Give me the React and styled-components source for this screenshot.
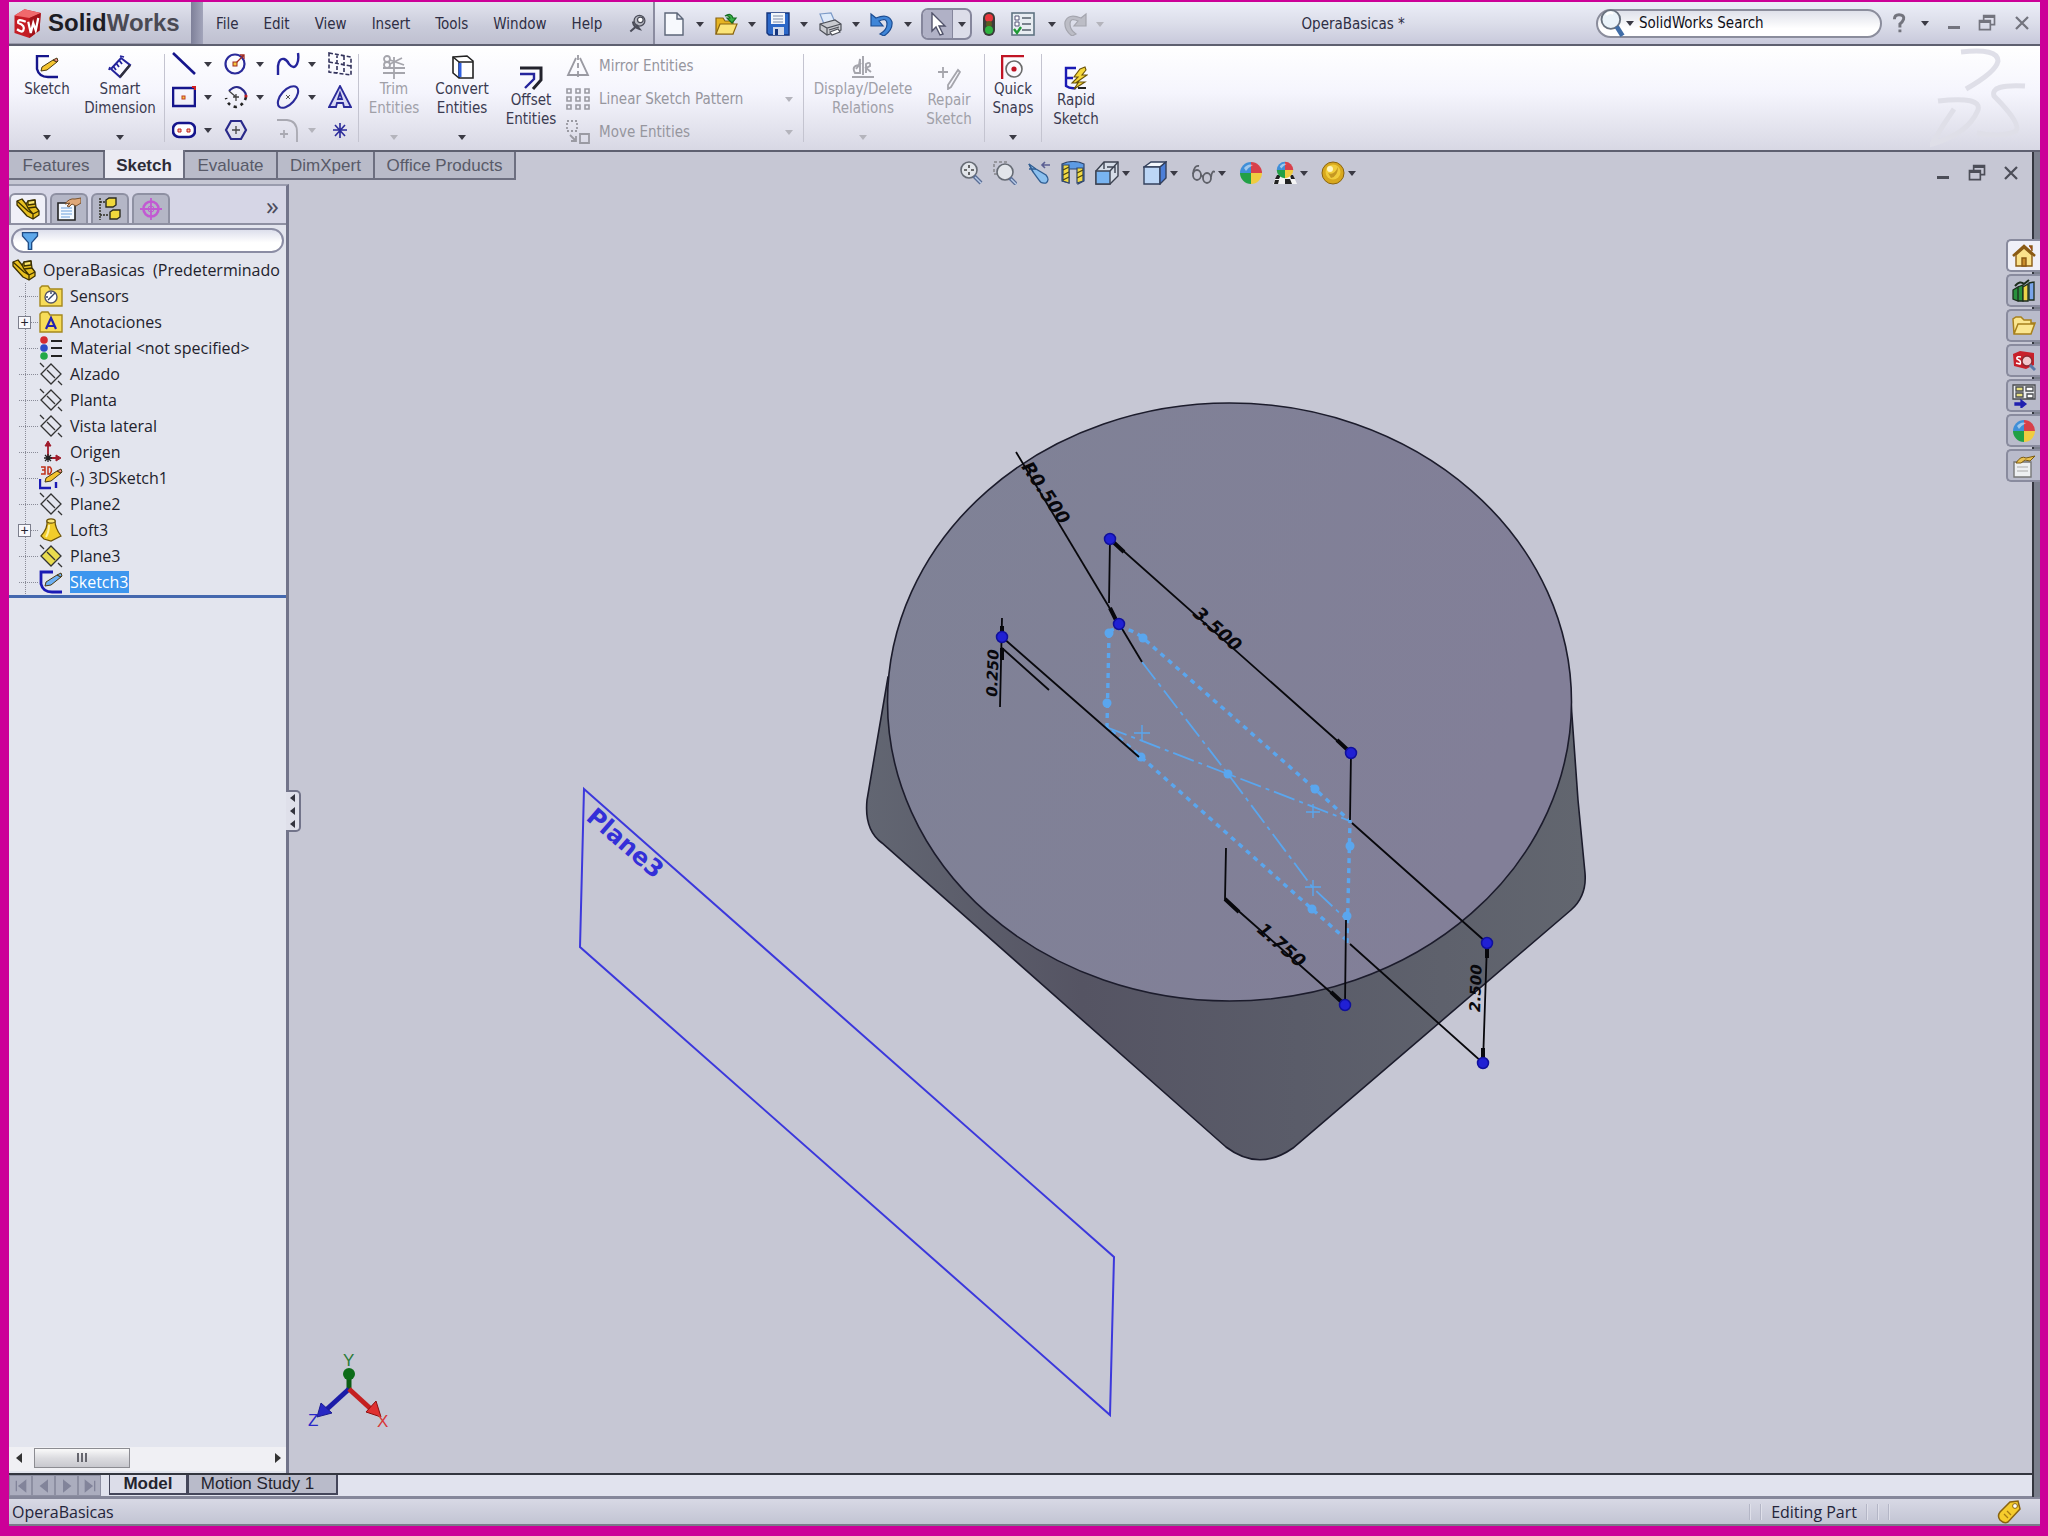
import React from 'react';
import styled, { createGlobalStyle } from 'styled-components';

const uiFont = "'DejaVu Sans Condensed', 'Noto Sans', sans-serif";
const treeFont = "'Open Sans', 'Noto Sans', sans-serif";
const tabFont = "'Liberation Sans', Arial, sans-serif";

const GlobalStyle = createGlobalStyle`
  * { box-sizing: border-box; }
  body { margin: 0; background: #cc0098; }
  button { border: 0; padding: 0; background: none; font: inherit; color: inherit; cursor: pointer; }
  ul { list-style: none; margin: 0; padding: 0; }
  svg { display: block; flex: none; }
`;

/* ---------- icons, all on a 24 x 24 grid ---------- */

const pencil = (fill = '#f4c430', tip = '#e88') => (
  <g strokeLinejoin="round">
    <path d="M7 12 L18 5 L22 7 L12 15 L6 16 Z" fill={fill} stroke="#4a3a10" strokeWidth="1" />
    <path d="M18 5 L22 3 L23 6 L22 7 Z" fill={tip} stroke="#4a3a10" strokeWidth="1" />
  </g>
);

const ball = (
  <g>
    <path d="M12 12 V1 A11 11 0 0 0 1 12 Z" fill="#3f8fd8" />
    <path d="M12 12 V1 A11 11 0 0 1 23 12 Z" fill="#d8404a" />
    <path d="M12 12 H1 A11 11 0 0 0 12 23 Z" fill="#22a046" />
    <path d="M12 12 H23 A11 11 0 0 1 12 23 Z" fill="#f0cc40" />
    <path d="M5 7 Q9 2 14 4 Q10 6 7 10 Z" fill="#fff" opacity=".5" />
  </g>
);

const partShape = (
  <g fill="#e8c020" stroke="#3c3000" strokeWidth="1.3" strokeLinejoin="round">
    <path d="M1 4 L6 2 L10 7 L12 4 L19 3 L20 10 L23 14 V18 L17 22 L11 19 L1 8 Z" />
    <path d="M10 7 L12 11 L20 10 M12 11 L17 17 L23 14 M17 17 V22 M1 4 L12 14 L17 17" fill="none" />
    <path d="M12 4 L19 3 L19 7 L12 8 Z" fill="#fbe56a" />
  </g>
);

const refPlane = fill => (
  <g fill={fill} stroke="#333" strokeWidth="1.3">
    <path d="M12 2 L22 12 L12 22 L2 12 Z" />
    <path d="M8 8 L16 16" />
    <path d="M1 1 L5 5 M19 19 L23 23" />
  </g>
);

const folder = (
  <path d="M1 4 L3 2 H9 L11 5 H23 V22 H1 Z" fill="#f7dc58" stroke="#a5881c" strokeWidth="1.4" />
);

const hand = <path d="M8 7 Q12 1 18 2 L24 1 V6 L19 9 L15 7 L12 10 L10 9 L13 6 Z" fill="#e0a878" stroke="#7a5430" strokeWidth="1" />;

const magnifier = (
  <g>
    <circle cx="10" cy="9" r="8" fill="#e2e5ea" stroke="#666b74" strokeWidth="1.6" />
    <path d="M15 15 L22 22" stroke="#5a6e96" strokeWidth="4" />
    <path d="M16 16 L22 22" stroke="#b8cbe8" strokeWidth="1.4" />
  </g>
);

const ICONS = {
  cube: (
    <g>
      <path d="M2 6 L10 1 L23 4 L22 18 L14 24 L2 20 Z" fill="#c41c24" />
      <path d="M2 6 L10 1 L23 4 L14 8 Z" fill="#f0696c" />
      <path d="M14 8 L23 4 L22 18 L14 24 Z" fill="#a3121a" />
      <path d="M11 11 Q4 8 5 12 Q11 14 9 18 Q8 20 4 17 M13 11 L15 20 L17 12 L19 18 L21 8" fill="none" stroke="#fff" strokeWidth="1.8" />
    </g>
  ),
  pin: (
    <g stroke="#4a4c58" strokeWidth="1.5">
      <circle cx="15" cy="8" r="6.5" fill="#b4b6c0" />
      <circle cx="16" cy="7" r="3.4" fill="#fff" />
      <path d="M7 9 Q8 16 15 18 L12 14 L4 21" fill="none" strokeWidth="2.4" />
    </g>
  ),
  doc: <path d="M3 1 H15 L21 7 V23 H3 Z M15 1 V7 H21" fill="#f7f9fd" stroke="#5c6678" strokeWidth="1.4" />,
  open: (
    <g strokeWidth="1.2">
      <path d="M2 6 H9 L11 9 H19 V22 H2 Z" fill="#e6b422" stroke="#8a6410" />
      <path d="M2 22 L6 12 H23 L19 22 Z" fill="#fbe478" stroke="#8a6410" />
      <path d="M11 4 Q17 0 19 6 H22 L18 11 L13 6 H16 Q15 3 11 4 Z" fill="#38b048" stroke="#156b22" />
    </g>
  ),
  save: (
    <g>
      <path d="M1 1 H23 V23 H3 L1 21 Z" fill="#2c68c8" stroke="#15357c" strokeWidth="1.4" />
      <path d="M5 1 H19 V12 H5 Z" fill="#f4f7fc" />
      <path d="M7 4 H17 M7 7 H17 M7 10 H17" stroke="#7b8aa8" />
      <path d="M7 15 H18 V23 H7 Z" fill="#cfd8ea" />
      <path d="M9 17 H12 V23 H9 Z" fill="#15357c" />
    </g>
  ),
  print: (
    <g stroke="#4d5058" strokeWidth="1.2">
      <path d="M2 2 L13 1 L17 10 L6 12 Z" fill="#dfeafa" stroke="#7b9ac8" />
      <path d="M2 12 L17 8 L23 12 V18 L9 23 L2 18 Z" fill="#c9cbd0" />
      <path d="M2 12 L9 16 L23 12 M9 16 V23 M11 18 L21 15" fill="none" />
      <path d="M12 20 L20 17 L22 20 L14 23 Z" fill="#fff" />
    </g>
  ),
  undo: <path d="M1 2 V14 H13 L9 9 Q17 5 17 12 Q17 18 10 22 L14 24 Q23 18 22 10 Q19 1 6 6 Z" fill="#3f86d8" stroke="#1b4c92" strokeWidth="1.2" />,
  redo: <path d="M23 2 V14 H11 L15 9 Q7 5 7 12 Q7 18 13 22 L9 24 Q1 18 2 10 Q5 1 18 6 Z" fill="#bcbdc6" stroke="#a4a5ae" strokeWidth="1.2" />,
  cursor: <path d="M6 1 V19 L10 15 L14 23 L17 22 L13 14 H19 Z" fill="#fff" stroke="#50526a" strokeWidth="1.4" />,
  light: (
    <g>
      <rect x="6" y="0" width="12" height="24" rx="6" fill="#3a3c3a" />
      <circle cx="12" cy="6" r="4" fill="#e8363c" />
      <circle cx="12" cy="12" r="3" fill="#5b5b20" />
      <circle cx="12" cy="18" r="4" fill="#2fb340" />
    </g>
  ),
  options: (
    <g>
      <rect x="1" y="1" width="22" height="22" fill="#e8edf2" stroke="#5f7382" strokeWidth="1.6" />
      <path d="M4 4 H8 V8 H4 Z M4 10 H8 V14 H4 Z" fill="#fff" stroke="#557" />
      <path d="M11 6 H20 M11 12 H20 M11 18 H20" stroke="#55606c" strokeWidth="1.4" />
      <path d="M3 17 L6 21 L10 15" fill="none" stroke="#1f9a34" strokeWidth="2.4" />
    </g>
  ),
  sketch: (
    <g>
      <path d="M14 1 H2 V14 Q4 22 13 22 H23" fill="none" stroke="#15158c" strokeWidth="2.4" />
      {pencil()}
    </g>
  ),
  sketchBlue: (
    <g>
      <path d="M14 2 H2 V14 Q4 22 13 22 H23" fill="none" stroke="#1a1ab4" strokeWidth="2.8" />
      {pencil('#6cb0f4', '#6cb0f4')}
    </g>
  ),
  dimension: (
    <g fill="none" stroke="#24249c" strokeWidth="2">
      <path d="M3 14 L13 3 L22 10 L12 22 Z" fill="#fafaff" />
      <path d="M12 22 L22 10" stroke="#30303c" strokeWidth="2.6" />
      <path d="M11 5 L14 9 M8 8 L11 12 M5 11 L8 15 M16 2 L12 1 M2 12 L1 15" strokeWidth="1.8" />
    </g>
  ),
  line: <path d="M1 1 L23 22" stroke="#15158c" strokeWidth="2.6" />,
  circle: (
    <g fill="none">
      <circle cx="11" cy="12" r="9.5" stroke="#2a2a9a" strokeWidth="2.2" />
      <path d="M11 12 L20 3 M16 3 H20 V7" stroke="#a02a20" strokeWidth="1.3" />
      <rect x="9" y="10" width="4" height="4" fill="#f4c840" stroke="#a02a20" />
    </g>
  ),
  spline: <path d="M2 23 V14 Q3 6 8 7 Q11 8 13 12 Q18 18 21 12 Q23 8 22 1" fill="none" stroke="#24249c" strokeWidth="2.4" />,
  planeDash: <path d="M1 1 L23 5 V23 L1 20 Z M9 2 V21 M16 4 V22 M1 10 L23 14" fill="none" stroke="#33335c" strokeWidth="1.6" strokeDasharray="4 2" />,
  rect: (
    <g fill="none">
      <path d="M1 3 H23 V21 H1 Z" stroke="#15158c" strokeWidth="2.6" />
      <rect x="10" y="11" width="3" height="3" fill="#f4c840" stroke="#c03a20" />
      <path d="M20 2 H23 V5" stroke="#d02020" strokeWidth="2" />
    </g>
  ),
  arc: (
    <g fill="none">
      <path d="M5 6 Q13 -2 20 6 Q22 8 22 11" stroke="#2a2a8a" strokeWidth="2.2" />
      <path d="M22 12 Q20 20 12 22 Q4 21 2 13" stroke="#222" strokeWidth="2.6" strokeDasharray="3 4" />
      <path d="M5 6 L12 12 M12 9 V16 M9 12 H15" stroke="#444" strokeWidth="1.3" />
      <circle cx="22" cy="11" r="1.6" fill="#c02020" />
    </g>
  ),
  ellipse: (
    <g fill="none">
      <ellipse cx="12" cy="12" rx="13" ry="7" transform="rotate(-48 12 12)" stroke="#2a2a9a" strokeWidth="2.1" />
      <path d="M10 10 L14 14 M14 10 L10 14" stroke="#555" />
    </g>
  ),
  text: (
    <path d="M12 1 L23 22 H16 L15 18 H9 L8 22 H1 Z M12 8 L10 14 H14 Z" fill="#d9d9f4" stroke="#2a2a9a" strokeWidth="1.8" />
  ),
  slot: (
    <g>
      <rect x="1" y="5" width="22" height="14" rx="6" fill="#fff" stroke="#15158c" strokeWidth="2.6" />
      <path d="M6 11 H9 V14 H6 Z M15 11 H18 V14 H15 Z" fill="#f4c0a0" stroke="#c02020" />
    </g>
  ),
  polygon: (
    <g fill="none">
      <path d="M7 3 H17 L22 12 L17 21 H7 L2 12 Z" stroke="#2a2a8a" strokeWidth="2.2" />
      <path d="M12 8 V16 M8 12 H16" stroke="#444" strokeWidth="1.3" />
    </g>
  ),
  fillet: <path d="M1 2 H11 Q21 3 21 14 V24 M8 12 V20 M4 16 H12" fill="none" stroke="#a9a9b2" strokeWidth="1.8" />,
  point: <path d="M12 5 V20 M5 12 H19 M7 7 L17 18 M17 7 L7 18" stroke="#2a2a9a" strokeWidth="1.6" />,
  trim: (
    <g fill="none" stroke="#a5a5ac" strokeWidth="1.8">
      <path d="M1 13 H23 M1 18 H23 M12 2 V24" />
      <circle cx="5" cy="4" r="3" /><circle cx="5" cy="10" r="3" />
      <path d="M8 5 L22 10 M8 9 L20 3" />
    </g>
  ),
  convert: (
    <g fill="#fff" stroke="#222" strokeWidth="1.6">
      <path d="M3 2 L17 1 L23 6 V23 H9 L3 18 Z" />
      <path d="M9 7 H23 M9 7 V23 M3 2 L9 7" />
      <path d="M10 8 V22" stroke="#3060e0" strokeWidth="3" />
    </g>
  ),
  offset: (
    <g fill="none">
      <path d="M1 2 H22 V14 L14 23" stroke="#22222c" strokeWidth="3" />
      <path d="M1 8 H15 V13 L6 22" stroke="#24249c" strokeWidth="2.4" />
    </g>
  ),
  mirror: <path d="M10 4 L2 21 H10 M14 4 L22 21 H14 M12 1 V6 M12 9 V14 M12 17 V23 M4 21 H20" fill="none" stroke="#9a9aa2" strokeWidth="1.8" />,
  pattern: (
    <g fill="none" stroke="#9a9aa2" strokeWidth="1.6">
      {[2, 10, 18].map(y => <path key={y} d={`M1 ${y} h4 v4 h-4 Z M10 ${y} h4 v4 h-4 Z M19 ${y} h4 v4 h-4 Z`} />)}
    </g>
  ),
  move: (
    <g fill="none" stroke="#9a9aa2" strokeWidth="1.8">
      <path d="M1 1 H11 V11 H1 Z" strokeDasharray="2 2" />
      <path d="M14 14 H23 V23 H14 Z M4 15 L10 21 M10 16 V21 H5" />
    </g>
  ),
  relations: <path d="M1 22 H23 M12 1 V20 M4 18 Q0 11 8 10 L9 4 V18 Z M15 18 V9 Q20 6 19 11 L15 13 L20 17 M5 14 L10 8" fill="none" stroke="#a5a5ac" strokeWidth="1.9" />,
  repair: <path d="M6 1 V12 M1 6 H11 M21 4 L23 6 L14 21 L11 23 L11 19 Z" fill="none" stroke="#a5a5ac" strokeWidth="1.8" />,
  snaps: (
    <g fill="none">
      <path d="M1 24 V1 H23" stroke="#c01424" strokeWidth="2.6" />
      <circle cx="13" cy="14" r="8" stroke="#6a6a6a" strokeWidth="1.6" />
      <circle cx="13" cy="14" r="2.6" fill="#c01424" />
    </g>
  ),
  rapid: (
    <g>
      <path d="M12 2 H2 V20 Q6 23 12 22 M2 12 H9" fill="none" stroke="#1a1ab4" strokeWidth="2.4" />
      <path d="M16 3 L21 1 L22 4 L18 9 H23 L13 16 H21 L10 23 L14 17 H8 L14 11 H10 Z" fill="#f6d83a" stroke="#6b5208" strokeWidth="1.1" />
      <path d="M14 22 H22" stroke="#222" strokeWidth="2" />
    </g>
  ),
  zoomFit: <g>{magnifier}<path d="M10 4 V7 M10 11 V14 M5 9 H8 M12 9 H15" stroke="#444" strokeWidth="1.6" /></g>,
  zoomArea: <g><path d="M1 1 H14 V13 H1 Z" fill="none" stroke="#666" strokeDasharray="3 2" /><g transform="translate(2 2)">{magnifier}</g></g>,
  prevView: (
    <g>
      <path d="M2 3 L9 8 L19 14 Q23 19 19 22 Q14 23 12 19 L6 11 Z" fill="#8cc0ee" stroke="#315e92" strokeWidth="1.3" />
      <path d="M2 3 L6 11 M9 8 L2 8" stroke="#315e92" strokeWidth="1.4" />
      <path d="M23 4 H15 M18 1 L15 4 L18 7" fill="none" stroke="#5b5f92" strokeWidth="1.6" />
    </g>
  ),
  section: (
    <g stroke="#30466c" strokeWidth="1.2">
      <path d="M1 3 Q12 -2 23 3 V20 L17 23 V8 H8 V22 L1 20 Z" fill="#5d9be4" />
      <path d="M2 4 H8 V22 L2 20 Z M16 7 H22 V20 L16 22 Z" fill="#f2da42" />
      <path d="M2 9 L8 6 M2 14 L8 11 M2 19 L8 16 M16 12 L22 9 M16 17 L22 14" stroke="#4a4410" />
    </g>
  ),
  orient: (
    <g stroke="#3c4250" strokeWidth="1.4">
      <path d="M1 10 L9 1 H23 V15 L15 23 H1 Z" fill="#d6dde8" />
      <path d="M1 10 H15 V23 H1 Z" fill="#79b4f0" />
      <path d="M15 10 L23 1 M9 1 V8 M12 6 H20 V12" fill="none" />
    </g>
  ),
  display: (
    <g stroke="#33405c" strokeWidth="1.4">
      <path d="M1 6 L8 1 H23 L17 6 Z" fill="#f3f7fc" />
      <path d="M1 6 H17 V23 H1 Z" fill="#bcd6f6" />
      <path d="M17 6 L23 1 V17 L17 23 Z" fill="#4c7fd8" />
    </g>
  ),
  glasses: (
    <g fill="none" stroke="#5e6068" strokeWidth="1.8">
      <ellipse cx="6" cy="14" rx="4" ry="5" /><ellipse cx="16" cy="17" rx="4" ry="5" />
      <path d="M10 14 L12 16 M2 13 Q3 4 8 5 M20 16 Q21 9 24 11" />
    </g>
  ),
  ball,
  scene: (
    <g>
      <path d="M4 14 H20 L24 23 H0 Z" fill="#f4f4f4" />
      <path d="M4 14 H8 L6 18 H2 Z M12 18 H17 L19 23 H12 Z M17 14 H20 L22 18 H18 Z M2 19 H6 L5 23 H1 Z" fill="#222" />
      <g transform="translate(3 0) scale(.75)">{ball}</g>
    </g>
  ),
  gold: (
    <g>
      <circle cx="12" cy="12" r="11" fill="#d8a81e" stroke="#8a6410" />
      <circle cx="12" cy="11" r="7.5" fill="#f0cc3c" />
      <path d="M7 12 Q13 15 17 6 Q17 15 10 17 Z" fill="#a87410" opacity=".6" />
      <circle cx="9" cy="8" r="3" fill="#fff6c0" />
    </g>
  ),
  part: partShape,
  props: (
    <g>
      <path d="M1 6 H18 V23 H1 Z" fill="#f4f9ff" stroke="#222" strokeWidth="1.6" />
      <path d="M4 11 H15 M4 14 H15 M4 17 H15 M4 20 H13" stroke="#6aa0dc" strokeWidth="1.2" />
      {hand}
    </g>
  ),
  config: (
    <g stroke="#2c2c20" strokeWidth="1.4">
      <path d="M2 1 V23 M2 5 H8 M2 18 H10" strokeDasharray="2 1" />
      <path d="M8 3 L11 1 H18 V8 L15 10 H8 Z M12 15 L15 13 H22 V20 L19 22 H12 Z" fill="#f0d83c" />
    </g>
  ),
  target: (
    <g fill="none" stroke="#c25ad2">
      <circle cx="12" cy="12" r="7.5" strokeWidth="2.6" />
      <path d="M12 1 V23 M1 12 H23" strokeWidth="1.8" />
      <circle cx="12" cy="12" r="3" />
    </g>
  ),
  funnel: <path d="M3 2 H21 V6 L14 14 V22 H10 V14 L3 6 Z" fill="#5ea8ea" stroke="#1f4c86" strokeWidth="1.6" />,
  sensors: (
    <g>{folder}<circle cx="12" cy="13" r="6" fill="#fff" stroke="#556" strokeWidth="1.4" /><path d="M9 16 L16 9 M12 8 V10 M7 13 H9" stroke="#346" strokeWidth="1.4" /></g>
  ),
  notes: <g>{folder}<path d="M7 19 L12 8 L17 19 M9 16 H15" fill="none" stroke="#2424b0" strokeWidth="2.2" /></g>,
  material: (
    <g>
      <circle cx="5" cy="4" r="3.8" fill="#d42a30" /><circle cx="5" cy="12" r="3.8" fill="#2c4cc8" /><circle cx="5" cy="20" r="3.8" fill="#22a848" />
      <path d="M12 5 H23 M12 12 H23 M12 20 H23" stroke="#222" strokeWidth="2.2" />
    </g>
  ),
  plane: refPlane('none'),
  planeGold: refPlane('#e9dc4e'),
  origin: (
    <g stroke="#a01c2c" fill="#a01c2c" strokeWidth="1.8">
      <path d="M9 18 V5 M10 18 H18" />
      <path d="M6 6 L9 1 L12 6 Z M17 15 L22 18 L17 21 Z" strokeWidth="1" />
      <path d="M9 14 V22 M5 18 H13 M6 15 L12 21 M12 15 L6 21" stroke="#222" strokeWidth="1.3" />
    </g>
  ),
  sketch3d: (
    <g>
      <path d="M2 1 H6 V8 H2 M3 4 H6 M9 1 H11 Q14 4 11 8 H9 Z" fill="none" stroke="#c03018" strokeWidth="1.5" />
      <path d="M1 13 V22 H12 M17 22 V16" fill="none" stroke="#1a1ab4" strokeWidth="2.4" />
      {pencil()}
    </g>
  ),
  loft: (
    <g stroke="#6b5208" strokeWidth="1.2">
      <path d="M8 3 Q9 10 2 18 L5 21 L12 23 L22 18 Q16 10 16 3 Z" fill="#f2cc2a" />
      <ellipse cx="12" cy="3" rx="4.2" ry="2.2" fill="#fbe678" />
      <path d="M10 7 Q10 14 7 19" fill="none" stroke="#fdf0a0" strokeWidth="2" />
    </g>
  ),
  home: (
    <g stroke="#8a5a14" strokeWidth="1.4">
      <path d="M4 11 L12 4 L20 11 V22 H4 Z" fill="#fbe28c" />
      <path d="M1 12 L12 2 L23 12" fill="none" strokeWidth="2.6" />
      <path d="M17 2 H20 V7" fill="#b04020" /><path d="M10 14 H14 V22 H10 Z" fill="#c88c2c" />
    </g>
  ),
  library: (
    <g stroke="#1c2c1c" strokeWidth="1.3">
      <path d="M1 11 L6 8 V22 L1 20 Z M6 8 L11 6 V22 H6 Z" fill="#28903c" />
      <path d="M11 8 L16 5 V22 H11 Z" fill="#ecd24a" /><path d="M17 4 L22 3 V21 H17 Z" fill="#7aa4ea" />
      <path d="M3 7 Q8 1 12 5 L17 1" fill="none" strokeWidth="2" />
    </g>
  ),
  openFolder: <path d="M2 20 L1 5 L4 3 H9 L12 6 H19 V9 H23 L19 20 Z M2 20 L6 10 H23" fill="#fbe690" stroke="#a8801c" strokeWidth="1.5" />,
  swSearch: (
    <g>
      <path d="M1 5 L8 2 L22 4 V16 L14 20 L2 17 Z" fill="#c8202a" />
      <path d="M9 8 Q4 7 5 10 Q10 12 8 15 L4 14" fill="none" stroke="#fff" strokeWidth="1.6" />
      <circle cx="15" cy="12" r="5" fill="#f0c8cc" stroke="#8a2a30" strokeWidth="1.4" /><path d="M18 16 L23 21" stroke="#5a78a8" strokeWidth="3" />
    </g>
  ),
  palette: (
    <g stroke="#4a4c50" strokeWidth="1.3">
      <path d="M1 1 H23 V15 H1 Z" fill="#eceef0" /><path d="M4 3 H11 V7 H4 Z M4 9 H11 V13 H4 Z" fill="#e8e080" /><path d="M14 3 H21 V7 H14 Z M15 10 H21 V14 H15 Z" fill="#fff" />
      <path d="M3 19 H9 V16 L14 20 L9 24 V21 H3 Z" fill="#2020b0" stroke="#2020b0" />
    </g>
  ),
  custom: <g><path d="M2 8 H19 V23 H2 Z" fill="#eef0f2" stroke="#777" strokeWidth="1.4" /><path d="M5 13 H16 M5 17 H16" stroke="#aaa" /><path d="M4 9 Q9 1 14 4 L23 2 L18 7 L13 6 L9 9 Z" fill="#e8c050" stroke="#7a5a14" /></g>,
  tag: (
    <g>
      <path d="M13 2 L21 1 L23 9 L11 22 Q7 24 3 20 Q0 16 3 12 Z" fill="#f6cc2c" stroke="#8a6410" strokeWidth="1.5" />
      <circle cx="18" cy="6" r="2.4" fill="#fff" stroke="#8a6410" /><path d="M7 14 L11 18 M10 11 L14 15" stroke="#a87c14" strokeWidth="1.3" />
    </g>
  ),
  help: <path d="M7 8 Q7 3 12 3 Q18 3 17 8 Q16 11 13 13 V17 M13 19 V22" fill="none" stroke="#73747e" strokeWidth="3.2" />,
  minimize: <path d="M6 15 H18 V18 H6 Z" fill="currentColor" />,
  restore: <path d="M8 9 V3 H21 V14 H16 M8 5 H21 M3 9 H16 V20 H3 Z M3 11 H16" fill="none" stroke="currentColor" strokeWidth="2" />,
  close: <path d="M4 4 L20 20 M20 4 L4 20" stroke="currentColor" strokeWidth="3" />,
  look: (
    <g>
      <circle cx="11" cy="9" r="8" fill="#eaf3fa" stroke="#68717e" strokeWidth="1.6" />
      <path d="M7 5 Q10 2 13 4" fill="none" stroke="#fff" strokeWidth="2" />
      <path d="M16 15 L21 23" stroke="#3f6da8" strokeWidth="4" />
    </g>
  ),
};

const Icon = ({ name, size = 24 }) => (
  <svg width={size} height={size} viewBox="0 0 24 24" aria-hidden="true">{ICONS[name]}</svg>
);

const Arrow = styled.span`
  width: 0;
  height: 0;
  border: 4px solid transparent;
  border-top: 5px solid ${p => (p.$off ? '#b4b4bc' : '#3a3a44')};
  border-bottom: 0;
`;

/* ---------- frame ---------- */

const Frame = styled.div`
  display: flex;
  flex-direction: column;
  min-height: 100vh;
  border: solid #cc0098;
  border-width: 2px 8px 10px 9px;
  background: #c6c7d4;
  font-family: ${uiFont};
  font-size: 15px;
  color: #2e2e44;
`;

const TitleBar = styled.header`
  display: flex;
  align-items: center;
  height: 44px;
  border-bottom: 2px solid #5e6070;
  background: linear-gradient(#eceef8, #dcdeea 50%, #c8c9db);
`;

const MenuSide = styled.div`
  display: flex;
  align-self: stretch;
  border-right: 2px solid #8b8ca0;
  background: linear-gradient(#e2e3ee, #c9cbda 60%, #bfc0d0);
`;

const Brand = styled.div`
  display: flex;
  align-items: center;
  gap: 6px;
  width: 182px;
  padding-left: 3px;
  border-bottom: 1px solid #9a9bac;
  font: bold 24px ${tabFont};
  color: #1c1c24;

  span { color: #4a4a54; }
`;

const Grip = styled.div`
  width: 12px;
  background: linear-gradient(90deg, #7e8099, #a2a4ba);
`;

const Menu = styled.nav`
  display: flex;
  align-items: center;
  gap: 25px;
  padding: 2px 6px 0 13px;
`;

const QuickBar = styled.div`
  display: flex;
  align-items: center;
  padding: 2px 0 0 6px;
`;

const IconButton = styled.button`
  display: flex;
  align-items: center;
  justify-content: center;
  width: ${p => p.$w || 26}px;
  height: 26px;
  color: ${p => p.$tone || '#73747e'};
`;

const SelectTool = styled.div`
  display: flex;
  align-items: center;
  height: 32px;
  margin-right: 4px;
  border: 2px solid #85869c;
  border-radius: 7px;
  background: #dcdde9;

  button:first-child {
    height: 28px;
    border-right: 1px solid #85869c;
    border-radius: 5px 0 0 5px;
    background: #b0b1c6;
  }
`;

const DocTitle = styled.div`
  flex: 1;
  padding-top: 2px;
  text-align: center;
`;

const Search = styled.label`
  display: flex;
  align-items: center;
  width: 286px;
  height: 29px;
  margin-right: 4px;
  border: 2px solid #8b8d9c;
  border-radius: 15px;
  background: linear-gradient(#dfe1ea, #fff 70%);

  input {
    flex: 1;
    min-width: 0;
    padding: 0 0 0 5px;
    border: 0;
    outline: 0;
    background: none;
    font: 15px ${uiFont};
    color: #101018;
  }
  input::placeholder { color: #101018; opacity: 1; }
`;

const Ribbon = styled.section`
  display: flex;
  height: 106px;
  padding-left: 5px;
  border-bottom: 2px solid #5e6070;
  background: linear-gradient(#fff, #f5f5fd 45%, #d8d8e4);
`;

const BigButton = styled.button`
  display: flex;
  flex-direction: column;
  align-items: center;
  justify-content: ${p => (p.$arrow ? 'flex-start' : 'center')};
  width: ${p => p.$w}px;
  padding: 9px 0 10px;
  line-height: 19px;
  color: ${p => (p.$off ? '#a0a0a8' : '#3a3a50')};

  svg { margin-bottom: 1px; }
  ${Arrow} { margin-top: auto; }
`;

const Rule = styled.div`
  width: 1px;
  margin: 8px 4px;
  background: #c4c4d0;
`;

const ToolGrid = styled.div`
  display: grid;
  grid-template-columns: repeat(3, 52px) 24px;
  align-content: space-between;
  padding: 5px 2px 7px 3px;
`;

const ToolCell = styled.div`
  display: flex;
  align-items: center;
`;

const EntityList = styled.div`
  display: flex;
  flex-direction: column;
  justify-content: space-between;
  width: 236px;
  padding: 8px 6px 6px 3px;
`;

const EntityButton = styled.button`
  display: flex;
  align-items: center;
  gap: 9px;
  height: 24px;
  color: #96969e;

  ${Arrow} { margin-left: auto; }
`;

const Watermark = styled.svg`
  margin-left: auto;
  margin-right: 14px;
`;

/* ---------- workspace ---------- */

const Workspace = styled.main`
  flex: 1;
  display: flex;
  flex-direction: column;
  border-right: 6px solid #7a7f8c;
  box-shadow: inset -2px 0 0 #33363f;
`;

const TabRow = styled.div`
  display: flex;
  align-items: flex-start;
  height: 32px;
`;

const CommandTab = styled.button`
  height: ${p => (p.$on ? 30 : 28)}px;
  width: ${p => p.$w}px;
  margin-top: ${p => (p.$on ? -2 : 0)}px;
  padding-top: ${p => (p.$on ? 3 : 1)}px;
  border: solid #6d6f80;
  border-width: 0 2px 2px 0;
  background: ${p => (p.$on ? '#ebebf3' : '#b9bbc9')};
  font: ${p => (p.$on ? 'bold ' : '')}17px ${tabFont};
  color: ${p => (p.$on ? '#2c2c38' : '#585a68')};
`;

const ViewTools = styled.div`
  flex: 1;
  display: flex;
  justify-content: center;
  gap: 10px;
  padding: 8px 124px 0 0;
`;

const ViewTool = styled.div`
  display: flex;
  align-items: center;

  button + button { width: 14px; }
`;

const WindowButtons = styled.div`
  display: flex;
  padding: 8px 6px 0 0;
`;

const Body = styled.div`
  flex: 1;
  display: flex;
`;

const Side = styled.aside`
  position: relative;
  display: flex;
  flex-direction: column;
  width: 280px;
  border-top: 2px solid #9a9cae;
  border-right: 3px solid #72748a;
  background: #e3e5ee;
`;

const PanelTabs = styled.div`
  display: flex;
  align-items: flex-end;
  gap: 3px;
  height: 39px;
  border-bottom: 2px solid #8e90a2;
  background: #d6d6e6;

  > span { margin: 0 7px 5px auto; font: 26px/26px ${treeFont}; color: #4c4c5c; }
`;

const PanelTab = styled.button`
  display: flex;
  align-items: center;
  justify-content: center;
  width: 38px;
  height: 30px;
  border: 2px solid #8e90a2;
  border-bottom: 0;
  border-radius: 6px 6px 0 0;
  background: ${p => (p.$on ? '#f0f0f8' : '#b4b6c6')};
`;

const Filter = styled.label`
  display: flex;
  align-items: center;
  height: 25px;
  margin: 3px 2px 4px;
  padding-left: 7px;
  border: 2px solid #8b8da4;
  border-radius: 13px;
  background: linear-gradient(#dddfec, #fff 60%);

  input { flex: 1; min-width: 0; border: 0; outline: 0; background: none; font: 15px ${treeFont}; }
`;

const Tree = styled.ul`
  border-bottom: 3px solid #4468ae;
  font: 16px/26px ${treeFont};
  color: #22222c;
`;

const TreeRow = styled.li`
  display: flex;
  align-items: center;
  height: 26px;
  padding-left: ${p => (p.$root ? 3 : 9)}px;
  white-space: nowrap;

  button { margin-left: 7px; line-height: 22px; white-space: pre; }
  button[aria-selected='true'] { background: #3d96ee; color: #fff; }
`;

const Branch = styled.span`
  display: flex;
  align-items: center;
  align-self: stretch;
  width: 21px;
  background:
    linear-gradient(90deg, #8a8c98 50%, transparent 0) 7px 13px / 2px 1px repeat-x,
    linear-gradient(#8a8c98 50%, transparent 0) 7px 0 / 1px 2px repeat-y;

  i {
    width: 13px;
    height: 13px;
    border: 1px solid #7c7e8c;
    background: #f8f8fc;
    font: normal 14px/10px ${tabFont};
    text-align: center;
  }
`;

const ScrollBar = styled.div`
  display: flex;
  align-items: center;
  gap: 12px;
  height: 24px;
  margin: auto 0 2px;
  padding: 0 5px 3px 7px;
  background: #f0f0f4;

  i { border: 5px solid transparent; }
  i:first-child { border-right: 6px solid #333; border-left: 0; }
  i:last-child { margin-left: auto; border-left: 6px solid #333; border-right: 0; }
`;

const Thumb = styled.div`
  display: flex;
  align-items: center;
  justify-content: center;
  gap: 2px;
  width: 96px;
  height: 20px;
  border: 1px solid #8c8c92;
  background: linear-gradient(#fafafa, #dcdce0 50%, #c8c8ce);

  b { width: 2px; height: 9px; background: #66666e; }
`;

const Handle = styled.div`
  position: absolute;
  top: 604px;
  right: -15px;
  display: flex;
  flex-direction: column;
  align-items: center;
  justify-content: space-around;
  width: 15px;
  height: 42px;
  border: 2px solid #72748a;
  border-left: 0;
  border-radius: 0 5px 5px 0;
  background: #dfe0ea;

  i { border: 4px solid transparent; border-right: 5px solid #33343e; border-left: 0; }
`;

const Canvas = styled.div`
  position: relative;
  flex: 1;
  display: flex;

  > svg { width: 100%; height: 100%; }
`;

const TaskPane = styled.div`
  position: absolute;
  top: 55px;
  right: -6px;
  display: flex;
  flex-direction: column;
  gap: 2px;
`;

const TaskTab = styled.button`
  display: flex;
  align-items: center;
  justify-content: center;
  width: 34px;
  height: 33px;
  border: 2px solid #898b9e;
  border-right: 0;
  border-radius: 5px 0 0 5px;
  background: ${p => (p.$on ? '#f0f0f8' : '#b9bbcb')};
`;

const SheetBar = styled.footer`
  display: flex;
  height: 24px;
  margin-right: 2px;
  border-top: 2px solid #33363f;
  border-bottom: 1px solid #85879a;
  background: #e1e3ee;
`;

const NavButton = styled.button`
  width: 23px;
  height: 21px;
  border: 1px solid #8d8fa2;
  background: #abadbe;
  color: #82849a;
  display: flex;
  align-items: center;
  justify-content: center;
`;

const SheetTab = styled.button`
  width: ${p => p.$w}px;
  height: 20px;
  margin-left: ${p => (p.$on ? 8 : 0)}px;
  padding-right: ${p => (p.$on ? 0 : 10)}px;
  border: solid #44465a;
  border-width: 0 2px 2px 1px;
  background: ${p => (p.$on ? '#dcdde9' : '#b9bbca')};
  font: ${p => (p.$on ? 'bold ' : '')}17px/18px ${tabFont};
  color: #24242e;
`;

const StatusBar = styled.footer`
  display: flex;
  align-items: center;
  gap: 9px;
  height: 29px;
  padding: 0 19px 0 3px;
  border-top: 2px solid #85879a;
  border-bottom: 2px solid #7a7c8a;
  background: linear-gradient(#d8d9e5, #c2c4d3);
  font: 16px ${treeFont};
  color: #24243a;

  > span:first-child { margin-right: auto; }
  > svg { margin-left: 98px; }
`;

const Notch = styled.i`
  width: 2px;
  height: 16px;
  border-left: 1px solid #b4b6c6;
  border-right: 1px solid #dfe0ea;
`;

/* ---------- data ---------- */

const quickTools = ['doc', 'open', 'save', 'print', 'undo'];

const sketchTools = [
  ['line', 1], ['circle', 1], ['spline', 1], ['planeDash'],
  ['rect', 1], ['arc', 1], ['ellipse', 1], ['text'],
  ['slot', 1], ['polygon'], ['fillet', 2], ['point'],
];

const viewTools = [
  ['zoomFit'], ['zoomArea'], ['prevView'], ['section'], ['orient', 1],
  ['display', 1], ['glasses', 1], ['ball'], ['scene', 1], ['gold', 1],
];

const treeItems = [
  { icon: 'sensors', label: 'Sensors' },
  { icon: 'notes', label: 'Anotaciones', plus: true },
  { icon: 'material', label: 'Material <not specified>' },
  { icon: 'plane', label: 'Alzado' },
  { icon: 'plane', label: 'Planta' },
  { icon: 'plane', label: 'Vista lateral' },
  { icon: 'origin', label: 'Origen' },
  { icon: 'sketch3d', label: '(-) 3DSketch1' },
  { icon: 'plane', label: 'Plane2' },
  { icon: 'loft', label: 'Loft3', plus: true },
  { icon: 'planeGold', label: 'Plane3' },
  { icon: 'sketchBlue', label: 'Sketch3', selected: true },
];

const taskTabs = ['home', 'library', 'openFolder', 'swSearch', 'palette', 'ball', 'custom'];

const handles = [[1110, 539], [1351, 753], [1119, 624], [1002, 637], [1487, 943], [1483, 1063], [1345, 1005]];

const slotPoints = [
  [1109, 633], [1107, 703], [1143, 638], [1141, 757], [1315, 789],
  [1350, 846], [1347, 916], [1312, 909], [1228, 774],
];

/* ---------- parts ---------- */

const Large = ({ icon, lines, w, arrow, off }) => (
  <BigButton $w={w} $arrow={arrow} $off={off} disabled={off}>
    <Icon name={icon} />
    {lines.map(l => <span key={l}>{l}</span>)}
    {arrow && <Arrow $off={off} />}
  </BigButton>
);

const Model = () => (
  <svg viewBox="289 184 1745 1289" role="img" aria-label="Part model">
    <defs>
      <linearGradient id="side" x1="0" x2="1">
        <stop offset="0" stopColor="#626672" />
        <stop offset=".3" stopColor="#555463" />
        <stop offset=".6" stopColor="#5a5c69" />
        <stop offset="1" stopColor="#62666f" />
      </linearGradient>
      <linearGradient id="top" x1="0" y1="0" x2="1" y2=".3">
        <stop offset="0" stopColor="#7f8296" />
        <stop offset="1" stopColor="#827f98" />
      </linearGradient>
    </defs>

    <g stroke="#1c1c2c" strokeWidth="1.6">
      <path d="M888 677 L867 800 Q864 830 882 843 L1226 1147 Q1259 1172 1293 1148 L1571 910 Q1587 896 1585 873 L1578 800 L1571 702 Z" fill="url(#side)" />
      <ellipse cx="1229.5" cy="702" rx="342" ry="299" fill="url(#top)" />
    </g>

    <g fill="none" stroke="#5aa6ee">
      <g strokeWidth="3.4" strokeDasharray="5 5">
        <path d="M1109 633 L1107 727 L1141 757 L1312 909 L1350 943" />
        <path d="M1109 631 Q1126 624 1143 638 L1315 789 L1350 821 L1347 943" />
      </g>
      <g strokeWidth="1.8" strokeDasharray="22 5 4 5">
        <path d="M1142 662 L1228 774 L1313 888 L1347 920" />
        <path d="M1106 727 L1228 774 L1350 821" />
      </g>
      <path d="M1142 725 V741 M1134 733 H1150 M1313 804 V818 M1306 812 H1320 M1313 880 V896 M1305 887 H1321" strokeWidth="1.4" />
    </g>
    {slotPoints.map(([x, y]) => <circle key={`${x}-${y}`} cx={x} cy={y} r="4.5" fill="#5aa6ee" />)}

    <g stroke="#08080c" strokeWidth="1.8" fill="none">
      <path d="M1016 452 L1109 607 L1142 662" />
      <path d="M1109 603 L1110 539 L1351 753 L1350 820" />
      <path d="M1002 618 L1000 707 M1002 637 L1139 757 M1002 648 L1049 690" />
      <path d="M1352 823 L1487 943 L1483 1063 L1350 944" />
      <path d="M1226 848 L1225 899 L1345 1005 L1346 920" />
      <path d="M1110 539 L1124 552 M1351 753 L1337 740 M1110 608 L1118 624 M1002 637 V626 M1002 648 V660 M1487 943 V958 M1483 1063 V1048 M1225 899 L1239 912 M1345 1005 L1331 992" strokeWidth="4" />
    </g>
    {handles.map(([x, y]) => <circle key={x} cx={x} cy={y} r="5.5" fill="#2020d4" stroke="#10109c" strokeWidth="1.5" />)}

    <g fill="#08080c" fontFamily="DejaVu Sans" fontStyle="italic" fontSize="18" fontWeight="bold">
      <text transform="translate(1021 467) rotate(56)">R0.500</text>
      <text transform="translate(1192 615) rotate(41)">3.500</text>
      <text transform="translate(1256 931) rotate(41)">1.750</text>
      <text transform="translate(997 697) rotate(-88)" fontSize="15">0.250</text>
      <text transform="translate(1480 1012) rotate(-88)" fontSize="15">2.500</text>
    </g>

    <path d="M584 789 L1114 1257 L1110 1415 L580 947 Z" fill="none" stroke="#3c38dc" strokeWidth="2" />
    <text transform="translate(585 819) rotate(41)" fill="#3430d8" fontFamily="DejaVu Sans" fontSize="24" fontWeight="bold">Plane3</text>

    <g strokeWidth="5">
      <path d="M349 1389 V1374" stroke="#0c5c14" />
      <circle cx="349" cy="1374" r="6" fill="#0c6c18" />
      <path d="M349 1389 L326 1410" stroke="#1c1ca8" />
      <path d="M317 1417 L321 1403 L332 1413 Z" fill="#2828c4" stroke="#1c1c90" strokeWidth="1" />
      <path d="M349 1389 L372 1410" stroke="#c42020" />
      <path d="M381 1417 L366 1412 L376 1401 Z" fill="#e03030" stroke="#8c1010" strokeWidth="1" />
    </g>
    <g fontFamily="Liberation Sans" fontSize="17">
      <text x="343" y="1366" fill="#2c7c38">Y</text>
      <text x="308" y="1426" fill="#2828c8">Z</text>
      <text x="377" y="1427" fill="#d83838">X</text>
    </g>
  </svg>
);

const App = () => {
  return (
    <>
      <GlobalStyle />
      <Frame>
        <TitleBar>
          <MenuSide>
            <Brand><Icon name="cube" size={30} /><div>Solid<span>Works</span></div></Brand>
            <Grip />
            <Menu>
              {['File', 'Edit', 'View', 'Insert', 'Tools', 'Window', 'Help'].map(m => <button key={m}>{m}</button>)}
              <button aria-label="Pin menu"><Icon name="pin" size={20} /></button>
            </Menu>
          </MenuSide>
          <QuickBar>
            {quickTools.map(t => (
              <React.Fragment key={t}>
                <IconButton aria-label={t}><Icon name={t} /></IconButton>
                <IconButton aria-label={`${t} options`}><Arrow /></IconButton>
              </React.Fragment>
            ))}
            <SelectTool>
              <IconButton $w={30} aria-label="Select"><Icon name="cursor" /></IconButton>
              <IconButton $w={17} aria-label="Select options"><Arrow /></IconButton>
            </SelectTool>
            <IconButton aria-label="Rebuild"><Icon name="light" /></IconButton>
            <IconButton $w={42} aria-label="Options"><Icon name="options" /></IconButton>
            <IconButton $w={16} aria-label="Options menu"><Arrow /></IconButton>
            <IconButton $w={30} aria-label="Redo"><Icon name="redo" /></IconButton>
            <IconButton $w={20} aria-label="Redo options"><Arrow $off /></IconButton>
          </QuickBar>
          <DocTitle>OperaBasicas *</DocTitle>
          <Search>
            <Icon name="look" size={28} />
            <Arrow />
            <input placeholder="SolidWorks Search" aria-label="SolidWorks Search" />
          </Search>
          <IconButton aria-label="Help"><Icon name="help" size={22} /></IconButton>
          <IconButton aria-label="Help options"><Arrow /></IconButton>
          <IconButton $w={32} aria-label="Minimize"><Icon name="minimize" /></IconButton>
          <IconButton $w={34} aria-label="Restore"><Icon name="restore" size={20} /></IconButton>
          <IconButton $w={36} aria-label="Close"><Icon name="close" size={18} /></IconButton>
        </TitleBar>

        <Ribbon>
          <Large icon="sketch" lines={['Sketch']} w={66} arrow />
          <Large icon="dimension" lines={['Smart', 'Dimension']} w={80} arrow />
          <Rule />
          <ToolGrid>
            {sketchTools.map(([t, drop]) => (
              <ToolCell key={t}>
                <IconButton $w={24} aria-label={t}><Icon name={t} /></IconButton>
                {drop && <IconButton $w={24} aria-label={`${t} options`}><Arrow $off={drop === 2} /></IconButton>}
              </ToolCell>
            ))}
          </ToolGrid>
          <Rule />
          <Large icon="trim" lines={['Trim', 'Entities']} w={62} arrow off />
          <Large icon="convert" lines={['Convert', 'Entities']} w={74} arrow />
          <Large icon="offset" lines={['Offset', 'Entities']} w={64} />
          <EntityList>
            <EntityButton><Icon name="mirror" />Mirror Entities</EntityButton>
            <EntityButton><Icon name="pattern" />Linear Sketch Pattern<Arrow $off /></EntityButton>
            <EntityButton><Icon name="move" />Move Entities<Arrow $off /></EntityButton>
          </EntityList>
          <Rule />
          <Large icon="relations" lines={['Display/Delete', 'Relations']} w={110} arrow off />
          <Large icon="repair" lines={['Repair', 'Sketch']} w={62} off />
          <Rule />
          <Large icon="snaps" lines={['Quick', 'Snaps']} w={48} arrow />
          <Rule />
          <Large icon="rapid" lines={['Rapid', 'Sketch']} w={60} />
          <Watermark width="96" height="104" viewBox="0 0 96 104" fill="none" stroke="#dfdfe8" strokeWidth="5">
            <path d="M31 6 Q68 2 68 15 Q66 26 36 43" />
            <path d="M8 55 Q52 50 48 64 Q38 88 2 98 Q12 80 24 63" />
            <path d="M95 40 Q60 38 64 50 Q92 78 86 85 Q72 92 47 87" />
          </Watermark>
        </Ribbon>

        <Workspace>
          <TabRow>
            <CommandTab $w={96}>Features</CommandTab>
            <CommandTab $w={80} $on>Sketch</CommandTab>
            <CommandTab $w={93}>Evaluate</CommandTab>
            <CommandTab $w={97}>DimXpert</CommandTab>
            <CommandTab $w={141}>Office Products</CommandTab>
            <ViewTools>
              {viewTools.map(([t, drop]) => (
                <ViewTool key={t}>
                  <IconButton $w={24} aria-label={t}><Icon name={t} /></IconButton>
                  {drop && <IconButton $w={14} aria-label={`${t} options`}><Arrow /></IconButton>}
                </ViewTool>
              ))}
            </ViewTools>
            <WindowButtons>
              <IconButton $w={34} $tone="#4c4e58" aria-label="Minimize document"><Icon name="minimize" /></IconButton>
              <IconButton $w={34} $tone="#4c4e58" aria-label="Restore document"><Icon name="restore" size={20} /></IconButton>
              <IconButton $w={34} $tone="#4c4e58" aria-label="Close document"><Icon name="close" size={18} /></IconButton>
            </WindowButtons>
          </TabRow>

          <Body>
            <Side>
              <PanelTabs>
                {['part', 'props', 'config', 'target'].map((t, i) => (
                  <PanelTab key={t} $on={i === 0} aria-label={t}><Icon name={t} /></PanelTab>
                ))}
                <span>»</span>
              </PanelTabs>
              <Filter>
                <Icon name="funnel" size={20} />
                <input aria-label="Filter tree" />
              </Filter>
              <Tree role="tree">
                <TreeRow $root><Icon name="part" /><button>OperaBasicas  (Predeterminado</button></TreeRow>
                {treeItems.map(t => (
                  <TreeRow key={t.label}>
                    <Branch>{t.plus && <i>+</i>}</Branch>
                    <Icon name={t.icon} />
                    <button role="treeitem" aria-selected={!!t.selected}>{t.label}</button>
                  </TreeRow>
                ))}
              </Tree>
              <ScrollBar>
                <i />
                <Thumb><b /><b /><b /></Thumb>
                <i />
              </ScrollBar>
              <Handle><i /><i /><i /></Handle>
            </Side>
            <Canvas>
              <Model />
              <TaskPane>
                {taskTabs.map((t, i) => <TaskTab key={t} $on={i === 0} aria-label={t}><Icon name={t} /></TaskTab>)}
              </TaskPane>
            </Canvas>
          </Body>

          <SheetBar>
            {['M5 4 V20 M19 4 L9 12 L19 20 Z', 'M17 4 L7 12 L17 20 Z', 'M7 4 L17 12 L7 20 Z', 'M19 4 V20 M5 4 L15 12 L5 20 Z'].map((d, i) => (
              <NavButton key={d} aria-label={`Sheet nav ${i + 1}`}>
                <svg width="16" height="16" viewBox="0 0 24 24" fill="currentColor" stroke="currentColor" strokeWidth="2"><path d={d} /></svg>
              </NavButton>
            ))}
            <SheetTab $w={79} $on>Model</SheetTab>
            <SheetTab $w={150}>Motion Study 1</SheetTab>
          </SheetBar>
        </Workspace>

        <StatusBar>
          <span>OperaBasicas</span>
          <Notch />
          <Notch />
          <span>Editing Part</span>
          <Notch />
          <Notch />
          <Notch />
          <Icon name="tag" />
        </StatusBar>
      </Frame>
    </>
  );
};

export default App;
